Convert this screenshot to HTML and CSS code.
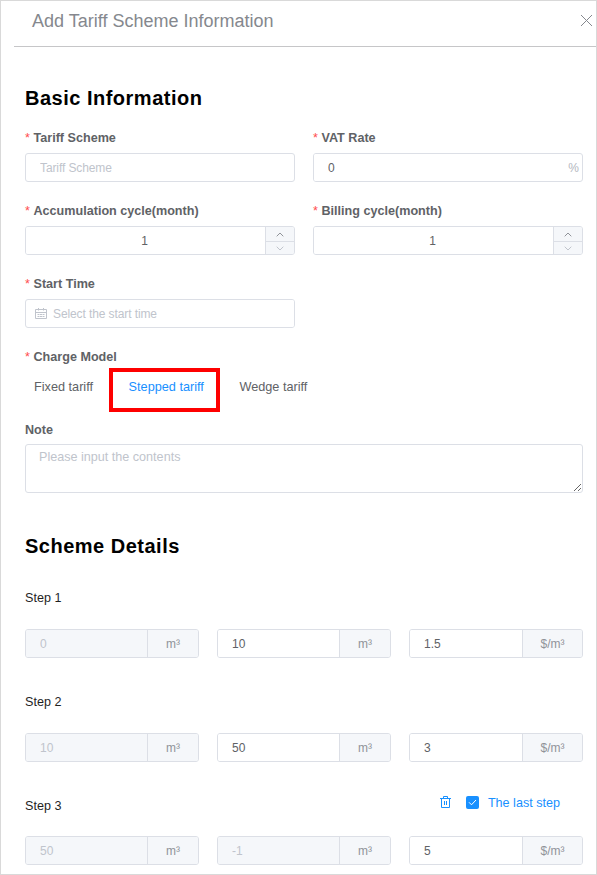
FILE: index.html
```
<!DOCTYPE html>
<html lang="en">
<head>
<meta charset="UTF-8">
<meta name="viewport" content="width=device-width, initial-scale=1.0">
<title>Add Tariff Scheme Information</title>
<link rel="stylesheet" href="styles.css">
</head>
<body>

<div class="dialog">
    <div class="dialog-header">
        <span class="dialog-title">Add Tariff Scheme Information</span>
        <svg class="close" width="13" height="13" viewBox="0 0 13 13"><path d="M1 1l11 11M12 1L1 12"/></svg>
    </div>

    <form class="dialog-body">
        <h2>Basic Information</h2>
        <div class="fields">
            <div class="field">
                <label class="required" for="scheme">Tariff Scheme</label>
                <input type="text" id="scheme" placeholder="Tariff Scheme">
            </div>
            <div class="field">
                <label class="required" for="vat">VAT Rate</label>
                <div class="input-box">
                    <input type="text" id="vat" value="0">
                    <span class="suffix">%</span>
                </div>
            </div>
            <div class="field">
                <label class="required" for="accumulation">Accumulation cycle(month)</label>
                <div class="input-box number">
                    <input type="text" id="accumulation" value="1">
                    <div class="arrows">
                        <span><svg width="8" height="5" viewBox="0 0 8 5"><path d="M.7 4.3L4 1l3.3 3.3"/></svg></span>
                        <span class="off"><svg width="8" height="5" viewBox="0 0 8 5"><path d="M.7.7L4 4 7.3.7"/></svg></span>
                    </div>
                </div>
            </div>
            <div class="field">
                <label class="required" for="billing">Billing cycle(month)</label>
                <div class="input-box number">
                    <input type="text" id="billing" value="1">
                    <div class="arrows">
                        <span><svg width="8" height="5" viewBox="0 0 8 5"><path d="M.7 4.3L4 1l3.3 3.3"/></svg></span>
                        <span class="off"><svg width="8" height="5" viewBox="0 0 8 5"><path d="M.7.7L4 4 7.3.7"/></svg></span>
                    </div>
                </div>
            </div>
            <div class="field">
                <label class="required" for="start">Start Time</label>
                <div class="input-box date">
                    <svg width="12" height="11" viewBox="0 0 12 11"><path d="M.5 1.5h11v9H.5zM.5 4.5h11M3.5 0v2.5M8.5 0v2.5M2.5 6.5h2M5 6.5h2M7.5 6.5h2M2.5 8.5h2M5 8.5h2M7.5 8.5h2"/></svg>
                    <input type="text" id="start" placeholder="Select the start time">
                </div>
            </div>
        </div>

        <div class="field charge">
            <label class="required">Charge Model</label>
            <div class="tabs">
                <span class="tab">Fixed tariff</span>
                <span class="tab active">Stepped tariff</span>
                <span class="tab">Wedge tariff</span>
            </div>
        </div>

        <div class="field note">
            <label for="note">Note</label>
            <textarea id="note" placeholder="Please input the contents"></textarea>
        </div>

        <h2 class="details">Scheme Details</h2>
        <div class="step">
            <div class="step-head">Step 1</div>
            <div class="step-row">
                <div class="group"><input type="text" value="0" disabled><span class="unit">m³</span></div>
                <div class="group"><input type="text" value="10"><span class="unit">m³</span></div>
                <div class="group"><input type="text" value="1.5"><span class="unit price">$/m³</span></div>
            </div>
        </div>
        <div class="step">
            <div class="step-head">Step 2</div>
            <div class="step-row">
                <div class="group"><input type="text" value="10" disabled><span class="unit">m³</span></div>
                <div class="group"><input type="text" value="50"><span class="unit">m³</span></div>
                <div class="group"><input type="text" value="3"><span class="unit price">$/m³</span></div>
            </div>
        </div>
        <div class="step last">
            <div class="step-head">
                <span>Step 3</span>
                <div class="last-step">
                    <svg class="trash" width="11" height="13" viewBox="0 0 11 13"><path d="M0 2.5h11M1.5 2.5v9h8v-9M3.5 2.5V.5h4v2M4.5 5v4M6.5 5v4"/></svg>
                    <span class="checkbox"><svg width="9" height="7" viewBox="0 0 9 7"><path d="M1 3.3L3.5 5.8 8 1"/></svg></span>
                    <span class="last-text">The last step</span>
                </div>
            </div>
            <div class="step-row">
                <div class="group"><input type="text" value="50" disabled><span class="unit">m³</span></div>
                <div class="group"><input type="text" value="-1" disabled><span class="unit">m³</span></div>
                <div class="group"><input type="text" value="5"><span class="unit price">$/m³</span></div>
            </div>
        </div>
    </form>
</div>

</body>
</html>
```
FILE: styles.css
```
* {
    box-sizing: border-box;
}
body {
    font-family: "Liberation Sans", Arial, sans-serif;
    font-size: 12px;
    margin: 0;
    color: #606266;
}
svg {
    fill: none;
    stroke: currentColor;
    flex: none;
}
.dialog {
    height: 875px;
    border: 1px solid #d9d9d9;
    overflow: hidden;
    background: #fff;
}
.dialog-header {
    display: flex;
    justify-content: space-between;
    align-items: center;
    height: 46px;
    margin-left: 13px;
    padding: 0 3px 6px 18px;
    border-bottom: 1px solid #c6c6c8;
    color: #85888e;
}
.dialog-title {
    font-size: 18px;
    line-height: 22px;
}
.dialog-body {
    padding: 39px 13px 0 24px;
}
h2 {
    margin: 0 0 19px;
    font-size: 20px;
    line-height: 24px;
    letter-spacing: 0.5px;
    color: #000;
}
.fields {
    display: grid;
    grid-template-columns: 1fr 1fr;
    gap: 20px 18px;
}
.field {
    display: flex;
    flex-direction: column;
}
label {
    margin-bottom: 6px;
    font-size: 12.6px;
    font-weight: bold;
    line-height: 18px;
}
.required::before {
    content: "*";
    margin-right: 3.6px;
    font-weight: normal;
    color: #ff4d4f;
}
input, textarea {
    width: 100%;
    min-width: 0;
    height: 29px;
    padding: 0 14px;
    border: 1px solid #dcdfe6;
    border-radius: 3px;
    background: #fff;
    font-family: inherit;
    font-size: 12px;
    color: #606266;
}
input::placeholder {
    letter-spacing: -0.1px;
    color: #c0c4cc;
}
.input-box, .group {
    display: flex;
    align-items: center;
    height: 29px;
    border: 1px solid #dcdfe6;
    border-radius: 3px;
    overflow: hidden;
}
.input-box input, .group input {
    flex: 1;
    height: 27px;
    border: none;
    border-radius: 0;
}
.suffix {
    margin-right: 3px;
    color: #b4b8c0;
}
.number input {
    padding: 0 2px 0 0;
    text-align: center;
}
.arrows {
    width: 29px;
    height: 27px;
    border-left: 1px solid #dcdfe6;
    background: #f5f7fa;
    color: #909399;
}
.arrows span {
    display: flex;
    justify-content: center;
    align-items: center;
    height: 15px;
    border-bottom: 1px solid #dcdfe6;
}
.arrows .off {
    height: 12px;
    border: none;
    color: #c0c4cc;
}
.date {
    padding-left: 9px;
    color: #c0c4cc;
}
.date input {
    padding: 0 6px;
}
.charge {
    margin-top: 20px;
}
.tabs {
    display: flex;
    height: 29px;
    line-height: 30px;
    font-size: 12.7px;
}
.tab {
    position: relative;
    margin-left: 9px;
}
.tab + .tab {
    margin-left: 35.6px;
}
.active {
    color: #1890ff;
}
/* red frame over the selected model */
.active::after {
    content: "";
    position: absolute;
    box-sizing: border-box;
    top: -4px;
    left: -20px;
    width: 111px;
    height: 44px;
    border: 4px solid #fe0000;
}
.note {
    margin-top: 20px;
}
.note label {
    margin-bottom: 5px;
}
textarea {
    display: block;
    height: 49px;
    padding: 5px 13px;
    resize: vertical;
}
textarea::placeholder {
    font-size: 12.6px;
    color: #c0c4cc;
}
.details {
    margin: 41px 0 31px;
}
.step {
    margin-bottom: 34px;
}
.step-head {
    display: flex;
    justify-content: space-between;
    height: 18px;
    margin-bottom: 22px;
    font-size: 12.6px;
    line-height: 18px;
    color: #1f1f1f;
}
.step-row {
    display: grid;
    grid-template-columns: repeat(3, 1fr);
    gap: 18px;
}
.step + .step {
    padding-top: 1px;
}
.last .step-head {
    margin-bottom: 21px;
}
.group input:disabled {
    background: #f5f7fa;
    color: #c0c4cc;
}
.unit {
    width: 51px;
    height: 27px;
    border-left: 1px solid #dcdfe6;
    background: #f5f7fa;
    line-height: 28px;
    text-align: center;
    color: #909399;
}
.price {
    width: 60px;
}
.last-step {
    display: flex;
    align-items: center;
    height: 11px;
    margin-right: 23px;
    color: #1890ff;
}
.checkbox {
    display: flex;
    justify-content: center;
    align-items: center;
    width: 13px;
    height: 13px;
    margin: 0 9px 0 15px;
    border-radius: 2px;
    background: #1890ff;
    color: #fff;
}
```
